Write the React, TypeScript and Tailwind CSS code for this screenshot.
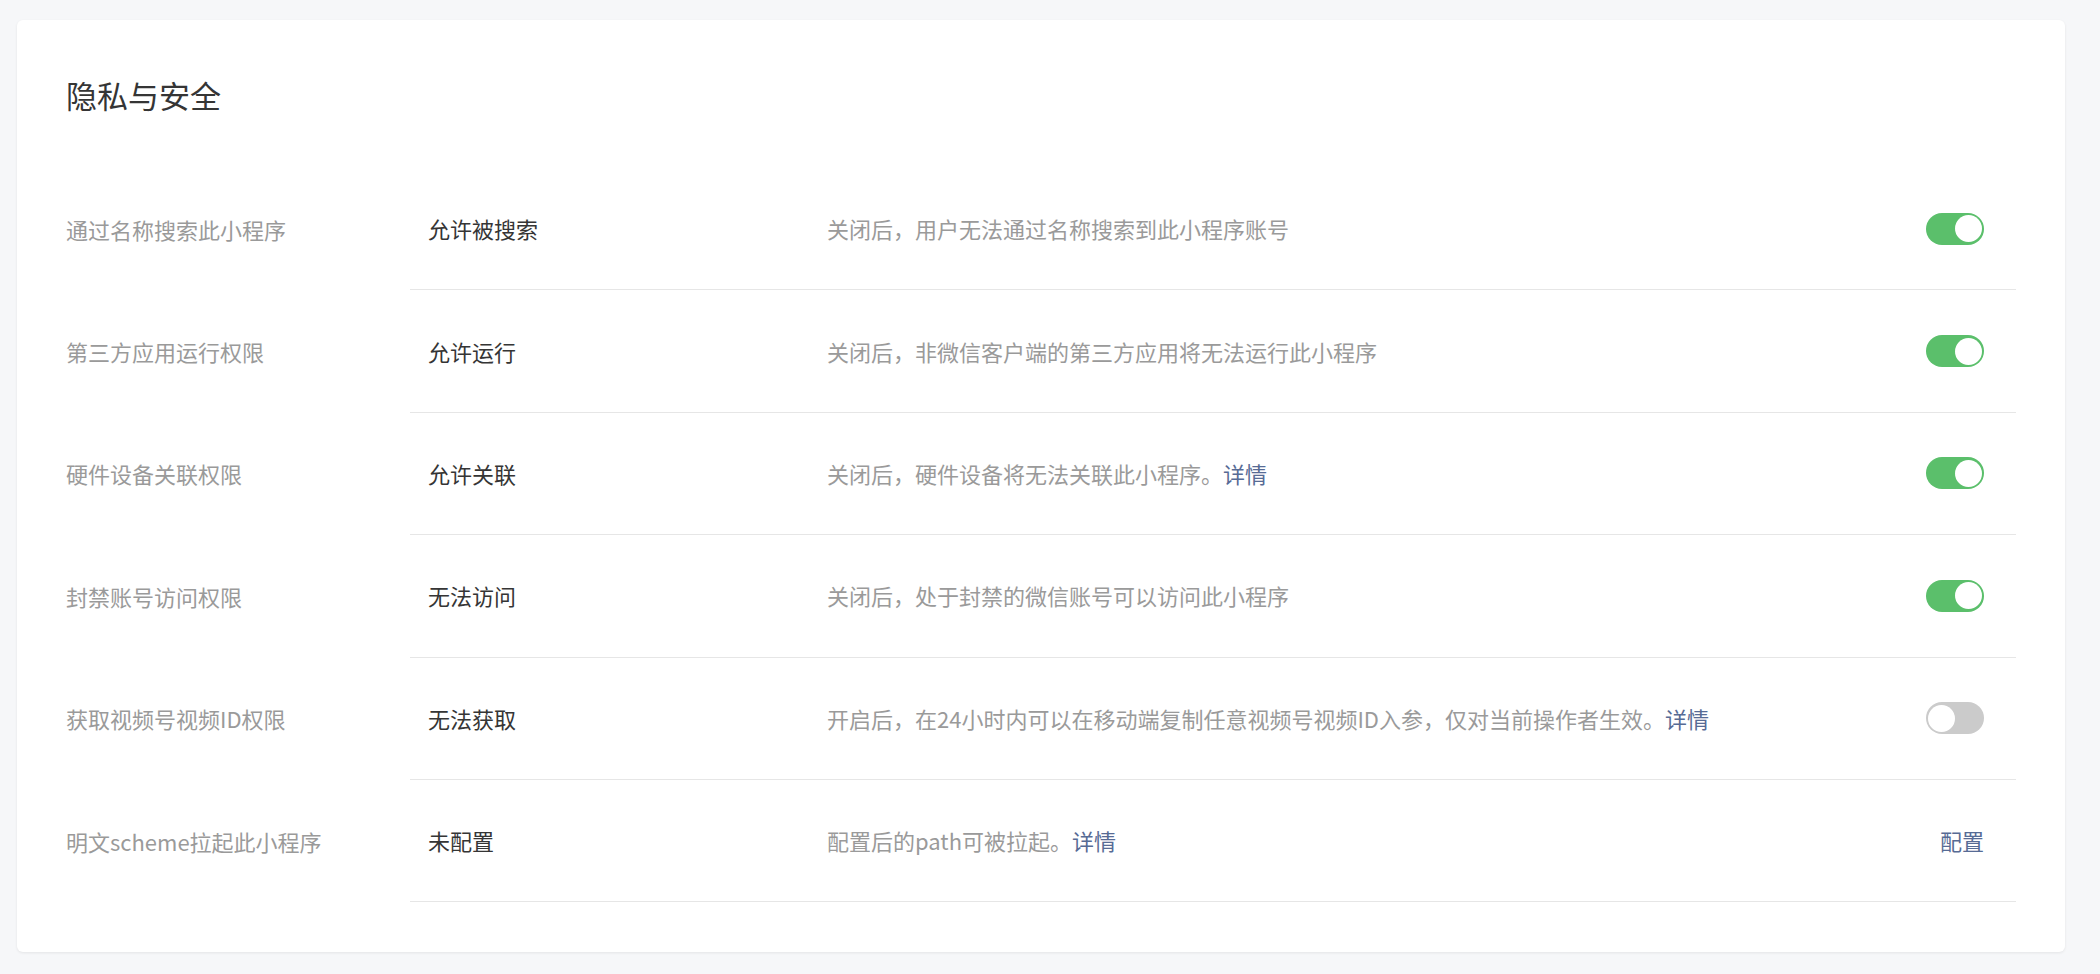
import React, { useState } from "react";

type Row = {
  label: string;
  value: string;
  desc: string;
  link?: boolean;
  kind: "switch" | "config";
  on?: boolean;
};

const rows: Row[] = [
  { label: "通过名称搜索此小程序", value: "允许被搜索", desc: "关闭后，用户无法通过名称搜索到此小程序账号", kind: "switch", on: true },
  { label: "第三方应用运行权限", value: "允许运行", desc: "关闭后，非微信客户端的第三方应用将无法运行此小程序", kind: "switch", on: true },
  { label: "硬件设备关联权限", value: "允许关联", desc: "关闭后，硬件设备将无法关联此小程序。", link: true, kind: "switch", on: true },
  { label: "封禁账号访问权限", value: "无法访问", desc: "关闭后，处于封禁的微信账号可以访问此小程序", kind: "switch", on: true },
  { label: "获取视频号视频ID权限", value: "无法获取", desc: "开启后，在24小时内可以在移动端复制任意视频号视频ID入参，仅对当前操作者生效。", link: true, kind: "switch", on: false },
  { label: "明文scheme拉起此小程序", value: "未配置", desc: "配置后的path可被拉起。", link: true, kind: "config" },
];

function Switch({ initial }: { initial: boolean }) {
  const [on, setOn] = useState(initial);
  return (
    <button
      type="button"
      onClick={() => setOn(!on)}
      className={`relative w-[58px] h-[32px] rounded-full flex items-center px-[2px] ${
        on ? "bg-[#5bbf6b] justify-end" : "bg-[#cbcbcb] justify-start"
      }`}
    >
      <span className="block w-[27px] h-[27px] rounded-full bg-white" />
    </button>
  );
}

export default function App() {
  return (
    <div className="min-h-[974px] bg-[#f6f7f9] pt-[20px] pl-[17px] pb-[23px] font-['Noto_Sans_CJK_SC',sans-serif]">
      <div className="w-[2048px] bg-white rounded-[6px] shadow-[0_1px_3px_rgba(0,0,0,0.08)] px-[49px] pt-[53px] pb-[50px]">
        <h2 className="h-[43px] leading-[43px] text-[31px] text-[#353535] font-normal">隐私与安全</h2>

        <div className="mt-[52px]">
          {rows.map((row) => (
            <div key={row.label} className="flex h-[122.4px]">
              <div className="w-[344px] flex items-center text-[22px] text-[#9a9a9a]">{row.label}</div>
              <div className="flex-1 flex items-center border-b border-[#e6e6e6] pl-[18px] pr-[32px]">
                <div className="w-[399px] text-[22px] text-[#353535]">{row.value}</div>
                <div className="flex-1 text-[22px] text-[#9a9a9a]">
                  {row.desc}
                  {row.link && <a className="text-[#576b95] cursor-pointer">详情</a>}
                </div>
                {row.kind === "switch" ? (
                  <Switch initial={!!row.on} />
                ) : (
                  <a className="text-[22px] text-[#576b95] cursor-pointer">配置</a>
                )}
              </div>
            </div>
          ))}
        </div>
      </div>
    </div>
  );
}
